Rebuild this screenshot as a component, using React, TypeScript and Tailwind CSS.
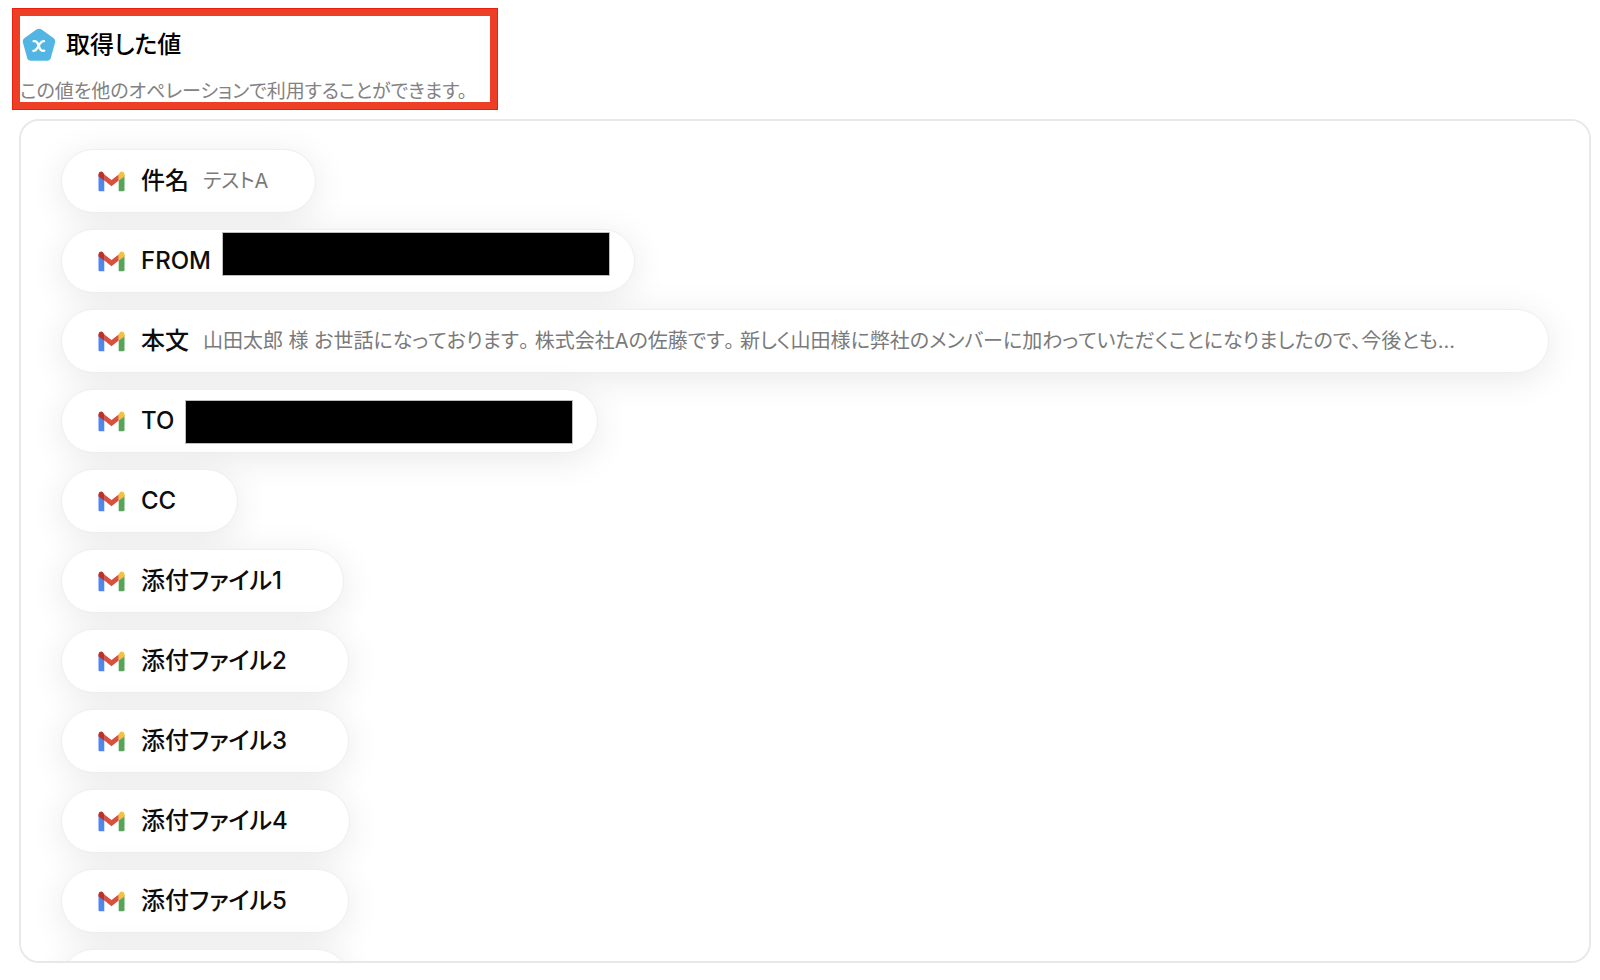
type Item = {
  label: string;
  value?: string;
  hiddenWidth?: string;
  bar?: string;
  wide?: boolean;
};

const items: Item[] = [
  { label: "件名", value: "テストA" },
  { label: "FROM", hiddenWidth: "w-[362px]", bar: "top-[2px]" },
  {
    label: "本文",
    value:
      "山田太郎 様 お世話になっております。 株式会社Aの佐藤です。 新しく山田様に弊社のメンバーに加わっていただくことになりましたので、今後とも...",
    wide: true,
  },
  { label: "TO", hiddenWidth: "w-[362px]", bar: "top-[10px]" },
  { label: "CC" },
  { label: "添付ファイル1" },
  { label: "添付ファイル2" },
  { label: "添付ファイル3" },
  { label: "添付ファイル4" },
  { label: "添付ファイル5" },
  { label: "添付ファイル6" },
];

function GmailIcon() {
  return (
    <svg viewBox="0 0 27 21" className="h-[21px] w-[27px] shrink-0" aria-hidden="true">
      <path d="M0.5 4H6.3V20.3H1.8Q0.5 20.3 0.5 19Z" fill="#5085ee" />
      <path d="M20.7 4H26.5V19Q26.5 20.3 25.2 20.3H20.7Z" fill="#57a55a" />
      <path d="M6.3 3.5L13.5 9L20.7 3.5V9.6L13.5 15.2L6.3 9.6Z" fill="#d9503f" />
      <path d="M0.5 3.2Q0.7 0.7 3 0.5Q4 0.5 5 1.3L6.4 3.4V9.7L0.5 5.5Z" fill="#b6332a" />
      <path d="M26.5 3.2Q26.3 0.7 24 0.5Q23 0.5 22 1.3L20.6 3.4V9.7L26.5 5.5Z" fill="#f2bf42" />
    </svg>
  );
}

function VariableIcon() {
  return (
    <svg viewBox="0 0 34 34" className="h-[34px] w-[34px] shrink-0" aria-hidden="true">
      <path
        d="M14.4 1.5Q17 -0.1 19.6 1.5L31.4 9.9Q33.9 11.7 33.1 14.5L28.8 30Q28 32.8 25 32.8H9Q6 32.8 5.2 30L0.9 14.5Q0.1 11.7 2.6 9.9Z"
        fill="#52b5e4"
      />
      <path
        d="M11.6 13.2C14 12.6 15.2 14 16 16L17.8 20.4C18.6 22.4 19.8 23.2 22.2 22.7M22 13.1C20 12.9 19 14 17.8 15.8L15.4 19.8C14.2 21.8 13.2 22.9 11.4 22.8"
        fill="none"
        stroke="#fff"
        strokeWidth="2.3"
        strokeLinecap="round"
      />
    </svg>
  );
}

function Pill({ item }: { item: Item }) {
  return (
    <li
      className={`relative flex h-16 max-w-full shrink-0 items-center rounded-full border border-[#efefef] bg-white pr-[47px] pl-[36px] shadow-[0_6px_36px_rgba(0,0,0,0.09)] ${item.wide ? "w-full" : ""}`}
    >
      <GmailIcon />
      <span className="ml-4 shrink-0 text-2xl font-medium text-[#0d0d0d]">{item.label}</span>
      {item.bar ? (
        <span className={`ml-3.5 ${item.hiddenWidth}`}>
          <span
            className={`absolute right-6 h-11 w-[388px] border border-[#bdbdbd] bg-black ${item.bar}`}
          />
        </span>
      ) : (
        <span className="ml-3.5 min-w-0 truncate text-xl text-[#7a7a7a] [font-kerning:none]">
          {item.value}
        </span>
      )}
    </li>
  );
}

export default function App() {
  return (
    <main className="flex h-screen flex-col bg-white pt-2 pr-[9px] pb-[17px] pl-3 font-['Inter','Noto_Sans_CJK_JP',sans-serif] [font-feature-settings:'palt']">
      <header className="h-[102px] w-[486px] border-8 border-[#ed3f25] pt-3 outline -outline-offset-1 outline-[#e8200c]">
        <h1 className="flex items-center gap-2.5 pl-0.5 text-2xl leading-[34px] font-medium text-black">
          <VariableIcon />
          取得した値
        </h1>
        <p className="mt-4 text-[19px] leading-7 whitespace-nowrap text-[#828282]">
          この値を他のオペレーションで利用することができます。
        </p>
      </header>
      <ul
        className="mt-[9px] ml-[7px] flex min-h-0 flex-1 flex-col items-start gap-4 overflow-y-auto rounded-[20px] border-2 border-[#e8e8e8] bg-white px-10 py-7 [scrollbar-width:none]"
        aria-label="取得した値"
      >
        {items.map((item) => (
          <Pill key={item.label} item={item} />
        ))}
      </ul>
    </main>
  );
}
